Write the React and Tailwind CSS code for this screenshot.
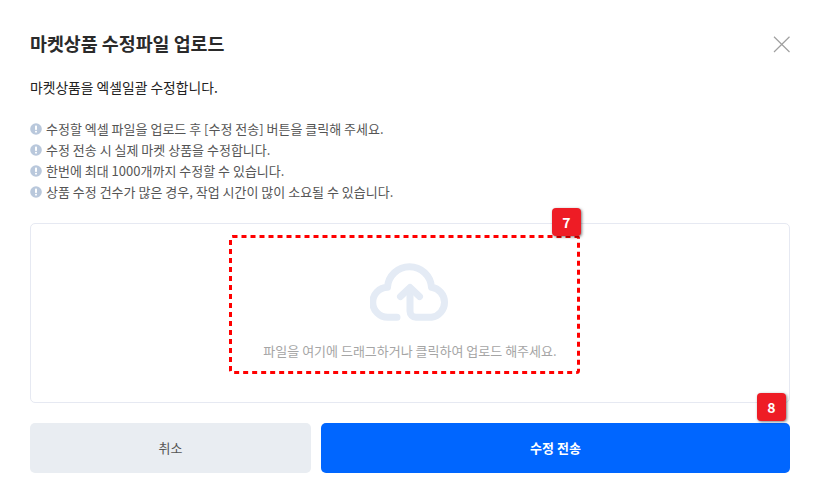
import React from "react";

const FONT = "font-['Pretendard','Noto_Sans_CJK_KR','Noto_Sans',sans-serif]";

const NOTICES = [
  "수정할 엑셀 파일을 업로드 후 [수정 전송] 버튼을 클릭해 주세요.",
  "수정 전송 시 실제 마켓 상품을 수정합니다.",
  "한번에 최대 1000개까지 수정할 수 있습니다.",
  "상품 수정 건수가 많은 경우, 작업 시간이 많이 소요될 수 있습니다.",
];

function InfoIcon() {
  return (
    <svg width="12" height="12" viewBox="0 0 12 12" className="shrink-0">
      <circle cx="6" cy="6" r="5.8" fill="#b9c8dc" />
      <rect x="5" y="2.500" width="2" height="4.500" rx="0.7" fill="#fff" />
      <rect x="5" y="7.800" width="2" height="1.800" rx="0.7" fill="#fff" />
    </svg>
  );
}

function CloseIcon() {
  return (
    <svg width="18" height="18" viewBox="0 0 18 18" fill="none" stroke="#a0a0a0" strokeWidth="1.2">
      <path d="M2 1.700L17.500 17M17.500 1.700L2 17" />
    </svg>
  );
}

function CloudUploadIcon() {
  return (
    <svg width="80" height="58" viewBox="0 0 80 58" fill="none" stroke="#e4ebf5" strokeWidth="7" strokeLinecap="round" strokeLinejoin="round">
      <path d="M27 54.300H18A15 15 0 0 1 17.500 24.300A22.050 22.050 0 0 1 61.500 24.300A15.150 15.150 0 0 1 61.500 54.300H46A6 6 0 0 1 40 48.300V27" />
      <path d="M30.500 33.500L40 24.500L49.500 33.500" />
    </svg>
  );
}

function GuideFrame() {
  return (
    <svg width="351" height="139" viewBox="0 0 351 139" fill="none" className="absolute top-[235px] left-[229px]">
      <rect x="1.500" y="1.500" width="348" height="136" rx="2" stroke="#ff0000" strokeWidth="3" strokeDasharray="5 4" />
    </svg>
  );
}

function Badge({ label, className }) {
  return (
    <div
      className={`absolute flex h-[28px] w-[29px] items-center justify-center rounded-[4px] bg-[#ee1c25] text-[14px] font-bold text-white shadow-[1px_1px_3px_rgba(0,0,0,0.5)] ${className}`}
    >
      {label}
    </div>
  );
}

export default function App() {
  return (
    <div className={`relative h-[494px] w-[816px] overflow-hidden bg-white pl-[30px] pr-[26px] ${FONT}`}>
      {/* Header */}
      <div className="flex h-[80px] items-start justify-between pt-[29px]">
        <h1 className="text-[18.4px] leading-[28px] font-bold text-[#2a2a2a]">마켓상품 수정파일 업로드</h1>
        <button className="mt-[6px]">
          <CloseIcon />
        </button>
      </div>

      <p className="text-[13.8px] leading-[14px] font-normal text-[#222]">마켓상품을 엑셀일괄 수정합니다.</p>

      {/* Notices */}
      <ul className="mt-[24px] flex flex-col">
        {NOTICES.map((text) => (
          <li key={text} className="flex h-[21px] items-center gap-[4px] text-[13px] text-[#555]">
            <InfoIcon />
            {text}
          </li>
        ))}
      </ul>

      {/* Upload area */}
      <div className="mt-[21px] flex h-[180px] flex-col items-center rounded-[5px] border border-[#e6e9f2] pt-[39px]">
        <CloudUploadIcon />
        <p className="mt-[20px] text-[13px] text-[#a5a5a5]">파일을 여기에 드래그하거나 클릭하여 업로드 해주세요.</p>
      </div>

      {/* Actions */}
      <div className="mt-[20px] flex gap-[10px]">
        <button className="h-[50px] w-[281px] rounded-[5px] bg-[#e9edf2] text-[13px] font-normal text-[#555]">취소</button>
        <button className="h-[50px] flex-1 rounded-[5px] bg-[#0066ff] text-[13px] font-bold text-white">수정 전송</button>
      </div>

      {/* Guide annotations */}
      <GuideFrame />
      <Badge label="7" className="top-[208px] left-[552px]" />
      <Badge label="8" className="top-[393px] left-[757px]" />
    </div>
  );
}
